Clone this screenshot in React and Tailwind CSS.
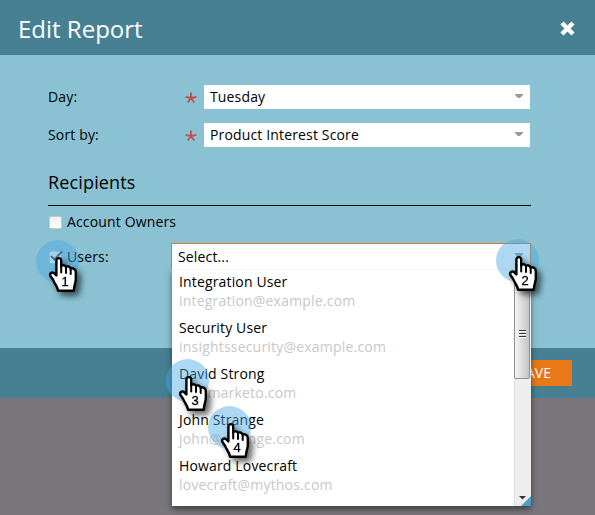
import React from "react";

const users = [
  ["Integration User", "integration@example.com"],
  ["Security User", "insightssecurity@example.com"],
  ["David Strong", "ds@marketo.com"],
  ["John Strange", "john@strange.com"],
  ["Howard Lovecraft", "lovecraft@mythos.com"],
];

function Marker({ n, className }) {
  return (
    <div className={"absolute z-20 size-[43px] " + className}>
      <div className="size-full rounded-full bg-[#46a9e6]/45" />
      <svg
        className="absolute left-[13px] top-[17px] overflow-visible drop-shadow-[4px_4px_3px_rgba(0,0,0,0.6)]"
        width="28"
        height="35"
        viewBox="0 0 28 35"
      >
        <path
          d="M7.4 3.4C7.4 0.3 12.2 0.3 12.2 3.4V9.5C12.8 7.6 16.6 7.8 17 10.2C17.8 8.8 21.2 9.2 21.7 11.8C22.8 10.6 26.8 11.6 26.8 15V22C26.8 26 25 28 24.8 33.8H9C8.8 29.5 5.4 27 4.2 23L1.4 19C0.2 16.2 3.4 14.2 5.6 16.6L7.4 18.5Z"
          fill="#fff"
          stroke="#000"
          strokeWidth="2.4"
          strokeLinejoin="round"
        />
        <path d="M12.2 9V15.5M17 10.5V16M21.7 12V17" fill="none" stroke="#000" strokeWidth="2" strokeLinecap="round" />
        <text x="16.2" y="29" textAnchor="middle" fontSize="13" fontFamily="'Liberation Sans', Arial, sans-serif" fill="#000" stroke="#000" strokeWidth="0.3">
          {n}
        </text>
      </svg>
    </div>
  );
}

function Arrow() {
  return (
    <svg width="8" height="4" viewBox="0 0 8 4" className="mb-[3px]">
      <path d="M0 0H8V1L5 4H3L0 1Z" fill="#999" />
    </svg>
  );
}

function Field({ label, value }) {
  return (
    <div className="flex h-6 items-center">
      <span className="w-[137px]">{label}</span>
      <svg width="12" height="12" viewBox="0 0 12 12" className="mt-px mr-[7px]">
        <path d="M6 6V0.5M6 6L0.6 4.8M6 6L11.4 4.8M6 6L2.8 10.6M6 6L9.2 10.6" stroke="#bf4f50" strokeWidth="1.8" />
      </svg>
      <div className="flex h-6 w-[326px] items-center justify-between bg-white pr-[7px] pl-[6px]">
        <span>{value}</span>
        <Arrow />
      </div>
    </div>
  );
}

function Checkbox({ checked }) {
  return (
    <span className="relative mr-[5px] ml-px size-[13px] rounded-[2px] border border-[#c9c9c9] bg-linear-to-b from-[#eee] to-white">
      {checked && (
        <svg className="absolute -top-[2px] -left-px" width="15" height="12" viewBox="0 0 15 12">
          <path d="M2 6L5.5 9.5L13 1.5" fill="none" stroke="#444" strokeWidth="2" />
        </svg>
      )}
    </span>
  );
}

export default function App() {
  return (
    <div className="relative flex h-[515px] w-[595px] flex-col overflow-hidden bg-[#7a777c] font-['Open_Sans',sans-serif] text-[14px] leading-[18px] tracking-[0.15px] text-black">
      <header className="flex h-[55px] shrink-0 items-center justify-between bg-[#468092] pr-5 pl-[18px] pt-[2px]">
        <h1 className="text-[24px] leading-8 tracking-normal text-white">Edit Report</h1>
        <svg width="15" height="15" viewBox="0 0 15 15">
          <path d="M2 2L13 13M13 2L2 13" stroke="#fff" strokeWidth="4.4" />
        </svg>
      </header>
      <main className="h-[293px] shrink-0 bg-[#8ac2d3] pt-[30px] pl-12">
        <div className="flex flex-col gap-[14px]">
          <Field label="Day:" value="Tuesday" />
          <Field label="Sort by:" value="Product Interest Score" />
        </div>
        <h2 className="mt-[21px] h-[38px] w-[483px] border-b border-black text-[18px] leading-7">Recipients</h2>
        <div className="mt-[7px] flex h-[18px] items-center">
          <Checkbox />
          Account Owners
        </div>
        <div className="mt-[17px] flex h-[18px] items-center">
          <Checkbox checked />
          Users:
        </div>
      </main>
      <footer className="flex h-[50px] shrink-0 justify-end bg-[#468092] pt-3 pr-[23px]">
        <button className="h-[26px] w-[72px] bg-[#e87818] pr-[21px] text-right text-[14px] tracking-normal text-white">SAVE</button>
      </footer>

      <div className="absolute top-[243px] left-[171px] z-10 h-[263px] w-[360px]">
        <div className="relative z-10 flex h-[26px] items-center justify-between border border-b-0 border-[#d87827] bg-white pr-[7px] pl-[6px]">
          <span>Select...</span>
          <Arrow />
        </div>
        <div className="ml-px flex h-[237px] justify-between border-t border-[#f5f5f5] bg-white shadow-[0_3px_6px_rgba(0,0,0,0.5)]">
          <ul className="pl-[7px] pt-[3px]">
            {users.map(([name, mail]) => (
              <li key={name} className="h-[46px]">
                <div className="h-[19px]">{name}</div>
                <div className="tracking-[0.2px] text-[#c8c8c8]">{mail}</div>
              </li>
            ))}
          </ul>
          <div className="flex w-[17px] flex-col justify-between border-l border-[#dedede] bg-[#eee]">
            <div className="-ml-px flex h-[109px] w-[16px] items-center justify-center rounded-b-[2px] border border-[#8f8f8f] bg-linear-to-r from-[#f5f5f5] to-[#c2c3c6] pt-[18px]">
              <svg width="7" height="9" viewBox="0 0 7 9">
                <path d="M0 1.5H7M0 4.5H7M0 7.5H7" stroke="#333" strokeWidth="1" />
                <path d="M0 2.5H7M0 5.5H7M0 8.5H7" stroke="#fff" strokeWidth="1" />
              </svg>
            </div>
            <svg width="16" height="14" viewBox="0 0 16 14">
              <path d="M4 4H11L7.5 7.5Z" fill="#333" />
              <path d="M16 4V14H6Z" fill="#4b9fc6" />
            </svg>
          </div>
        </div>
      </div>

      <Marker n="1" className="top-[240px] left-[36px]" />
      <Marker n="2" className="top-[239px] left-[496px]" />
      <Marker n="3" className="top-[359px] left-[166px]" />
      <Marker n="4" className="top-[406px] left-[208px]" />
    </div>
  );
}
